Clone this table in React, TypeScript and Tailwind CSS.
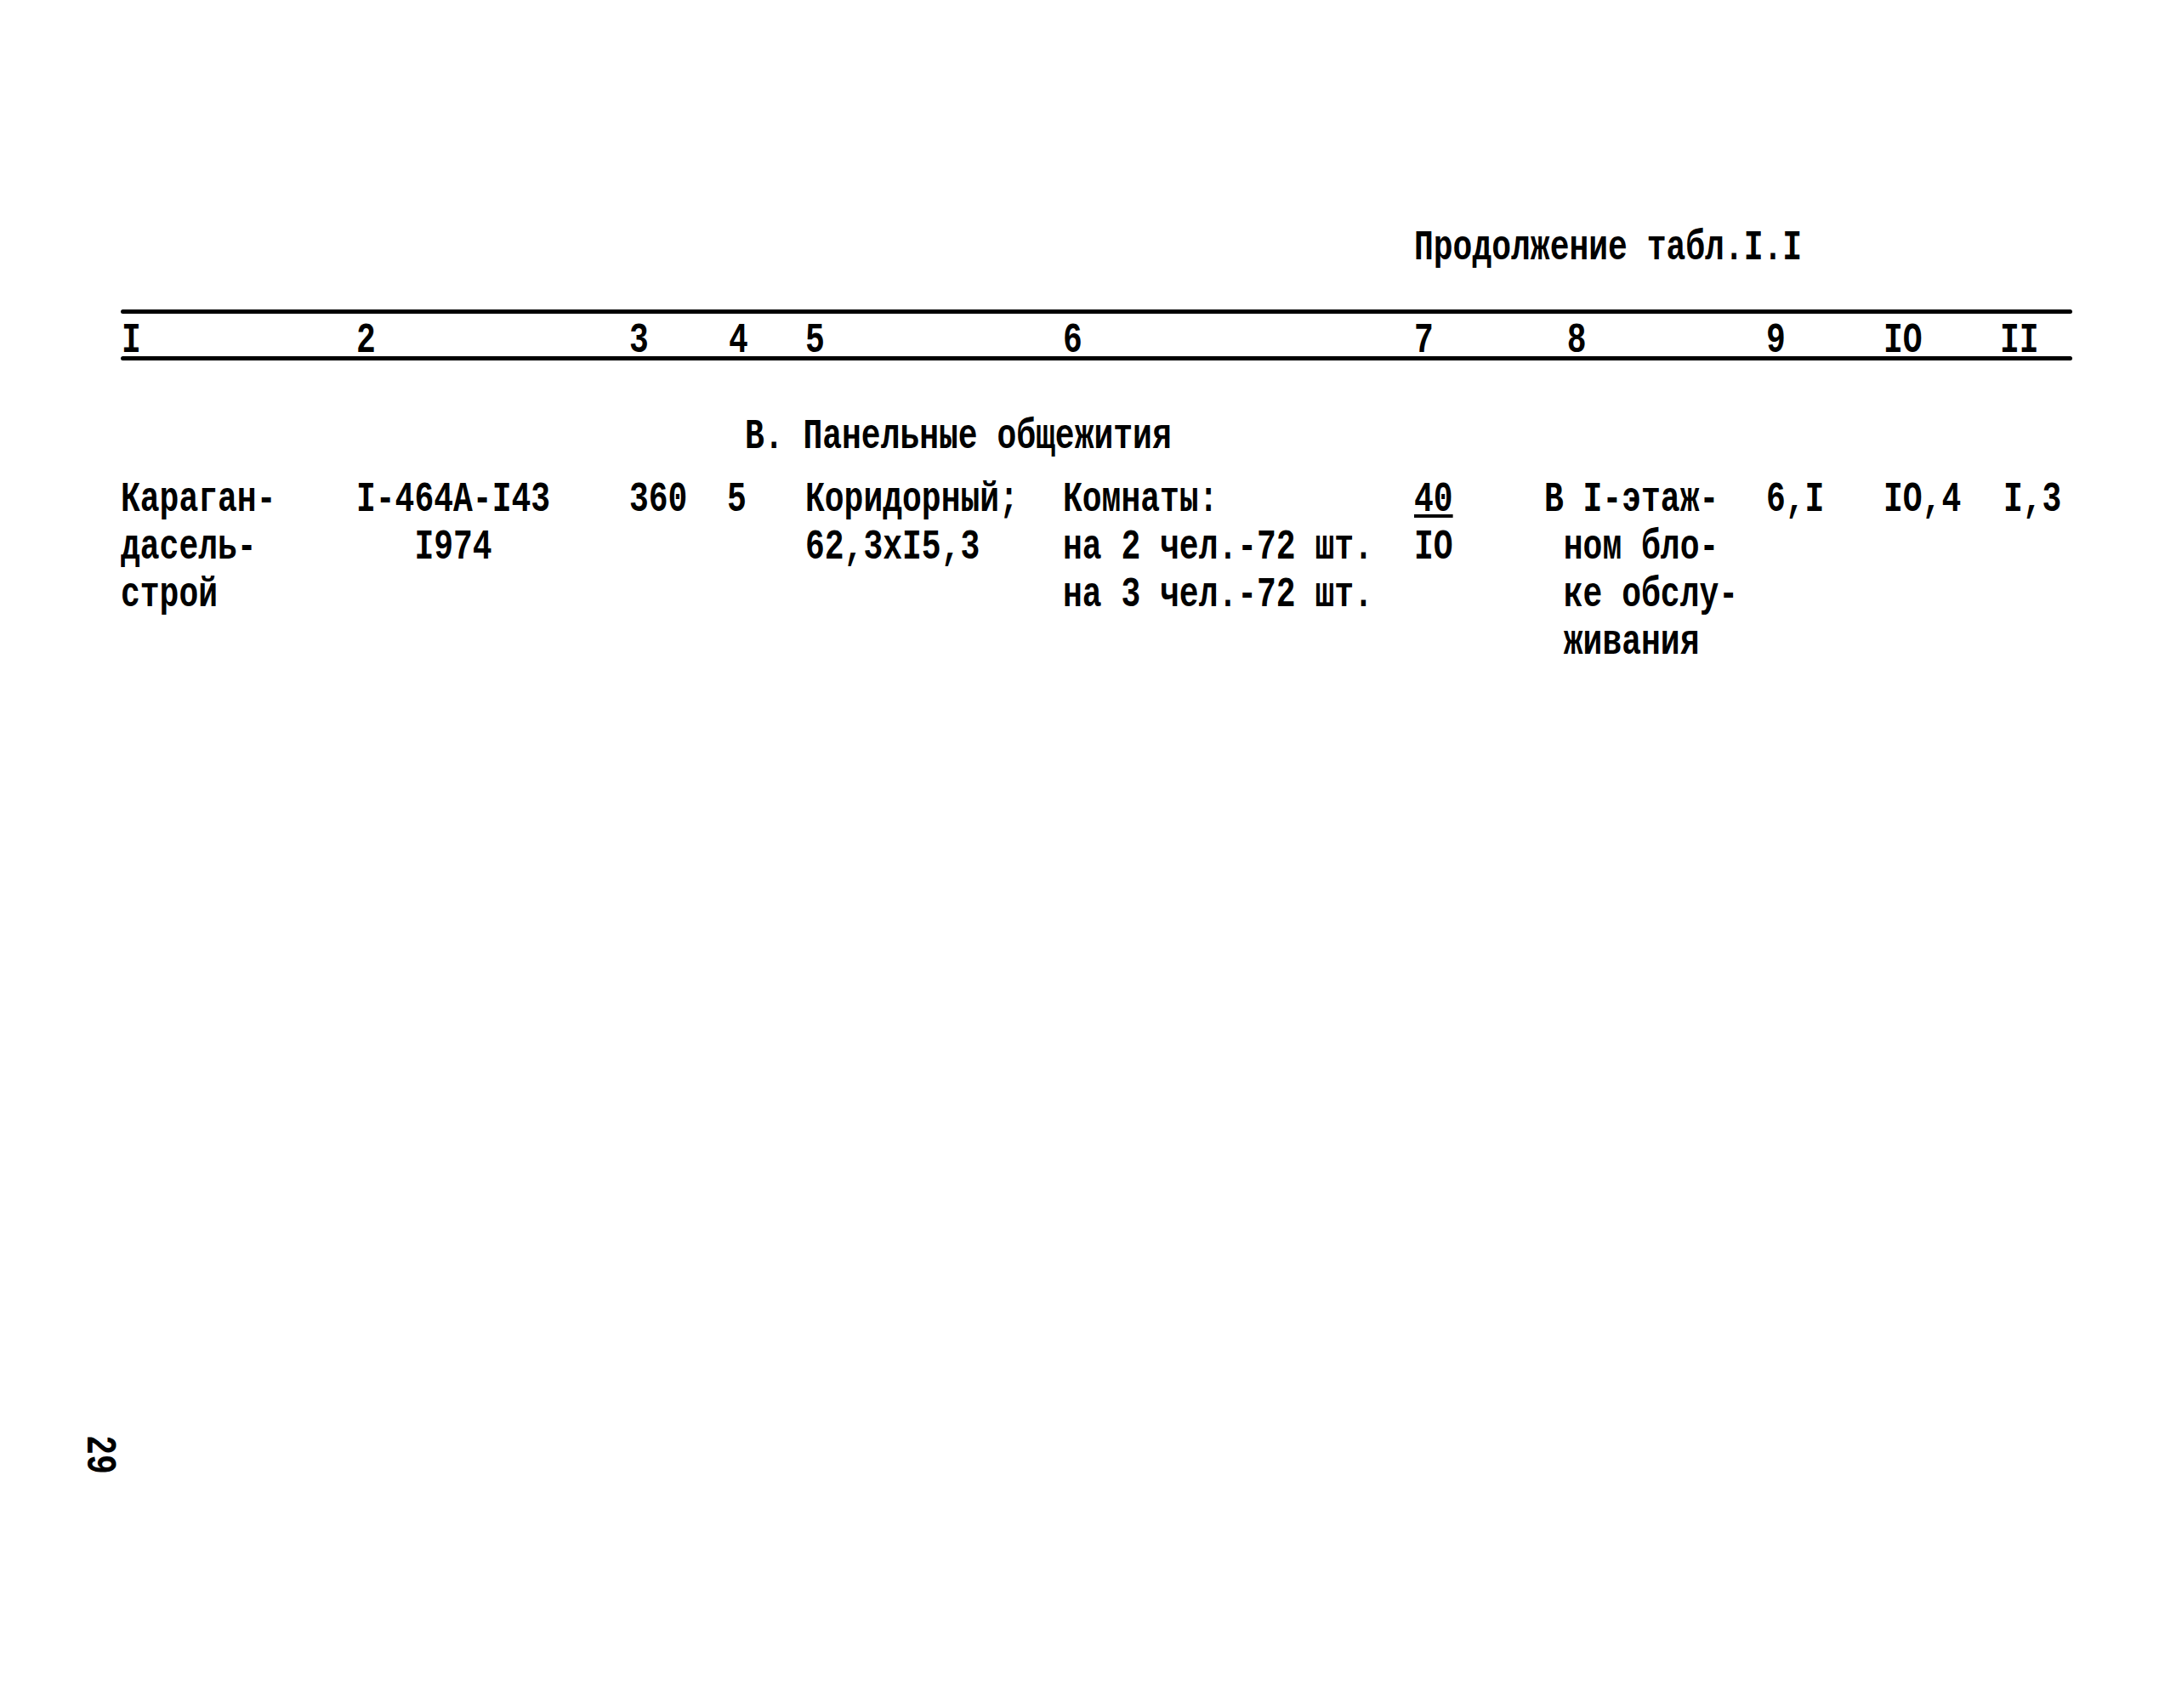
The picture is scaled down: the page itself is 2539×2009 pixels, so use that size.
import type { ReactNode } from "react"

// column grid shared by the header numbers and the data row
const cols =
  "grid grid-cols-[277px_321px_115px_92px_303px_413px_157px_257px_138px_141px_79px]"

// one typed line, glyphs stretched upward from the baseline like the typewriter face
const Ln = ({ children }: { children: ReactNode }) => (
  <div className="h-[56px] leading-[56px] whitespace-pre">
    <span className="inline-block origin-[0_38px] scale-y-[1.32]">{children}</span>
  </div>
)

const Head = ({ children, className = "" }: { children: ReactNode; className?: string }) => (
  <div className={`h-[32px] leading-[32px] whitespace-pre ${className}`}>
    <span className="inline-block origin-[0_26px] scale-y-[1.32]">{children}</span>
  </div>
)

const Rule = ({ className = "" }: { className?: string }) => (
  <div className={`h-[5px] bg-black rounded-full ${className}`} />
)

export default function App() {
  return (
    <div className="min-h-screen w-full bg-white text-black font-bold text-[38px] font-['Liberation_Mono',monospace]">
      <div className="ml-[142px] w-[2295px] pt-[266px]">
        {/* Title */}
        <div className="pl-[1521px] h-[57px] leading-[57px] whitespace-pre">
          <span className="inline-block origin-[0_39px] scale-y-[1.32]">Продолжение табл.I.I</span>
        </div>

        <Rule className="mt-[41px]" />

        {/* Column numbers */}
        <div className={`${cols} mt-[19px]`}>
          <Head className="pl-[1px]">I</Head>
          <Head>2</Head>
          <Head>3</Head>
          <Head className="pl-[2px]">4</Head>
          <Head>5</Head>
          <Head>6</Head>
          <Head>7</Head>
          <Head> 8</Head>
          <Head>9</Head>
          <Head>IO</Head>
          <Head className="-ml-[4px]">II</Head>
        </div>

        <Rule className="mt-[-1px]" />

        {/* Section heading */}
        <div className="pl-[734px] mt-[64px] h-[57px] leading-[57px] whitespace-pre">
          <span className="inline-block origin-[0_39px] scale-y-[1.32]">В. Панельные общежития</span>
        </div>

        {/* Data row */}
        <div className={`${cols} mt-[18px]`}>
          <div>
            <Ln>Караган-</Ln>
            <Ln>дасель-</Ln>
            <Ln>строй</Ln>
          </div>
          <div>
            <Ln>I-464A-I43</Ln>
            <Ln>   I974</Ln>
          </div>
          <div>
            <Ln>360</Ln>
          </div>
          <div>
            <Ln>5</Ln>
          </div>
          <div>
            <Ln>Коридорный;</Ln>
            <Ln>62,3xI5,3</Ln>
          </div>
          <div>
            <Ln>Комнаты:</Ln>
            <Ln>на 2 чел.-72 шт.</Ln>
            <Ln>на 3 чел.-72 шт.</Ln>
          </div>
          <div>
            <Ln>
              <span className="underline decoration-[3px] underline-offset-[3px]">40</span>
            </Ln>
            <Ln>IO</Ln>
          </div>
          <div className="-ml-[4px]">
            <Ln>В I-этаж-</Ln>
            <Ln> ном бло-</Ln>
            <Ln> ке обслу-</Ln>
            <Ln> живания</Ln>
          </div>
          <div>
            <Ln>6,I</Ln>
          </div>
          <div>
            <Ln>IO,4</Ln>
          </div>
          <div>
            <Ln>I,3</Ln>
          </div>
        </div>
      </div>

      {/* Page number, typed sideways */}
      <div className="ml-[83px] mt-[894px] h-[60px] w-[60px] flex items-center justify-center">
        <div className="rotate-90 h-[40px] leading-[40px] whitespace-pre">
          <span className="inline-block origin-[0_30px] scale-y-[1.32]">29</span>
        </div>
      </div>
    </div>
  )
}
